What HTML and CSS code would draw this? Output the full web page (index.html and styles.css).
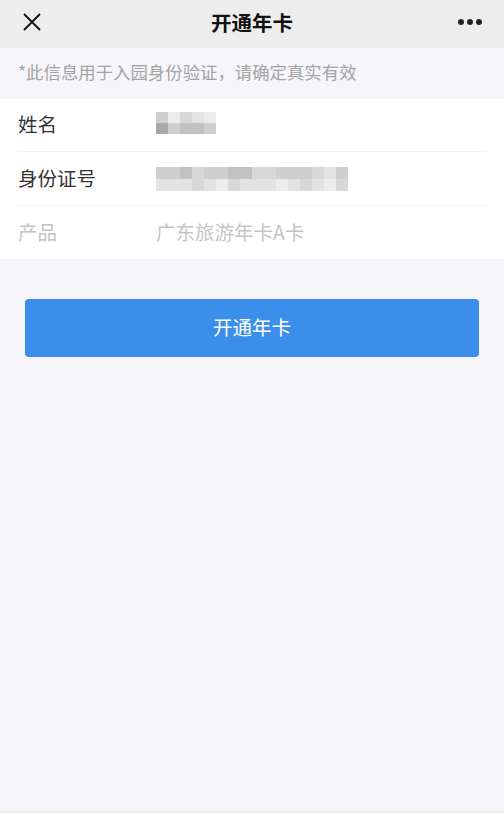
FILE: index.html
```html
<!DOCTYPE html>
<html lang="zh-CN">
<head>
    <meta charset="UTF-8">
    <meta name="viewport" content="width=device-width, initial-scale=1.0">
    <title>开通年卡</title>
    <link rel="stylesheet" href="styles.css">
</head>
<body>
    <!-- 顶部导航 -->
    <div class="nav">
        <svg class="nav-close" width="18" height="18" viewBox="0 0 18 18">
            <path d="M1 1 L17 17 M17 1 L1 17" stroke="#111" stroke-width="1.8" fill="none"/>
        </svg>
        <div class="nav-title">开通年卡</div>
        <div class="nav-more"><i></i><i></i><i></i></div>
    </div>

    <div class="notice">*此信息用于入园身份验证，请确定真实有效</div>

    <div class="form">
        <div class="row">
            <div class="label">姓名</div>
            <div class="mosaic name">
                <i class="s2"></i><i class="s5"></i><i class="s3"></i><i class="s4"></i><i class="s5"></i>
                <i class="s0"></i><i class="s2"></i><i class="s1"></i><i class="s1"></i><i class="s2"></i>
            </div>
        </div>
        <div class="row">
            <div class="label">身份证号</div>
            <div class="mosaic idno">
                <i class="s2"></i><i class="s2"></i><i class="s1"></i><i class="s3"></i><i class="s2"></i><i class="s2"></i><i class="s1"></i><i class="s1"></i><i class="s3"></i><i class="s3"></i><i class="s2"></i><i class="s2"></i><i class="s2"></i><i class="s3"></i><i class="s4"></i><i class="s2"></i>
                <i class="s4"></i><i class="s4"></i><i class="s4"></i><i class="s3"></i><i class="s4"></i><i class="s5"></i><i class="s3"></i><i class="s4"></i><i class="s4"></i><i class="s4"></i><i class="s5"></i><i class="s4"></i><i class="s3"></i><i class="s4"></i><i class="s5"></i><i class="s3"></i>
            </div>
        </div>
        <div class="row disabled">
            <div class="label">产品</div>
            <div class="value">广东旅游年卡A卡</div>
        </div>
    </div>

    <div class="actions">
        <button class="btn-primary">开通年卡</button>
    </div>
</body>
</html>
```

FILE: styles.css
```css
body {
    margin: 0;
    height: 813px;
    background-color: #f6f6fa;
    font-family: "Noto Sans CJK SC", "Noto Sans", sans-serif;
    color: #333;
    box-sizing: border-box;
    border-bottom: 2px solid #ebebef;
}
/* 导航栏 */
.nav {
    height: 48px;
    background-color: #ededed;
    display: flex;
    align-items: center;
    justify-content: center;
    position: relative;
}
.nav-close {
    position: absolute;
    left: 23px;
    top: 13px;
}
.nav-title {
    font-size: 20.5px;
    font-weight: bold;
    color: #111;
    margin-top: -5px;
}
.nav-more {
    position: absolute;
    right: 22px;
    top: 19px;
    display: flex;
    gap: 3px;
}
.nav-more i {
    width: 6px;
    height: 6px;
    border-radius: 50%;
    background-color: #222;
}
/* 提示 */
.notice {
    height: 50px;
    box-sizing: border-box;
    padding: 11px 18px 0;
    font-size: 17.4px;
    color: #a3a3a3;
    border-bottom: 1px solid #ededf1;
}
/* 表单 */
.form {
    background-color: #fff;
    padding-left: 17px;
    padding-right: 17px;
}
.row {
    height: 53px;
    display: flex;
    align-items: center;
    border-bottom: 1px solid #f0f0f0;
}
.row:last-child {
    border-bottom: none;
}
.label {
    width: 138px;
    font-size: 19.5px;
    color: #333;
    padding-left: 1px;
    margin-top: -2px;
}
.value {
    font-size: 19.5px;
    margin-top: -2px;
}
.row.disabled .label,
.row.disabled .value {
    color: #c4c4c4;
}
.mosaic {
    display: grid;
    grid-auto-rows: 11px;
}
.mosaic.name {
    grid-template-columns: repeat(5, 12px);
    margin-top: -4px;
}
.mosaic.idno {
    grid-template-columns: repeat(16, 12px);
    grid-auto-rows: 12px;
    margin-top: 1px;
}
.mosaic i { display: block; }
.s0 { background-color: #a9a9a9; }
.s1 { background-color: #c2c2c2; }
.s2 { background-color: #cfcfcf; }
.s3 { background-color: #d8d8d8; }
.s4 { background-color: #e3e3e3; }
.s5 { background-color: #ececec; }
/* 按钮 */
.actions {
    padding: 40px 25px 0 25px;
}
.btn-primary {
    width: 100%;
    height: 58px;
    border: none;
    border-radius: 4px;
    background-color: #3b8fea;
    color: #fff;
    font-size: 19.5px;
    font-family: inherit;
    padding-bottom: 4px;
}
```
